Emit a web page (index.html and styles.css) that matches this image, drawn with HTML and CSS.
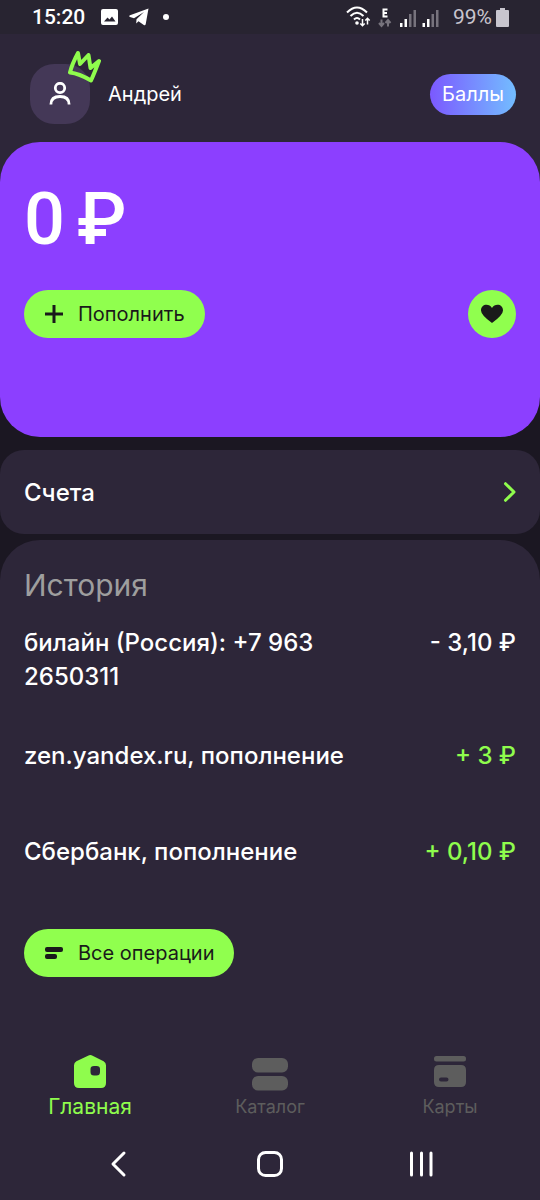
FILE: index.html
```html
<!DOCTYPE html>
<html lang="ru">
<head>
<meta charset="utf-8">
<meta name="viewport" content="width=device-width, initial-scale=1">
<title>Кошелёк</title>
<link rel="stylesheet" href="styles.css">
</head>
<body>
<div class="status">
  <div class="status-left">
    <span class="clock">15:20</span>
    <svg width="18" height="18" viewBox="0 0 18 18" aria-hidden="true"><path fill="#fff" fill-rule="evenodd" d="M2 1h13q2 0 2 2v12q0 2-2 2H2q-2 0-2-2V3q0-2 2-2zm1 12.500h11.500l-3.500-5-2.500 3-2-2z"/></svg>
    <svg width="20" height="18" viewBox="0 0 20 18" aria-hidden="true"><path fill="#fff" d="M19.500.5 1 7.300q-1.700.8 0 1.600l4 1.300L15 4 7.500 11.300l-.3 4.200 2.300-2.200 5.300 3.800q1.400.7 1.900-.9z"/></svg>
    <span class="dot"></span>
  </div>
  <div class="status-right">
    <svg width="96" height="22" viewBox="0 0 96 22" aria-hidden="true">
      <g fill="none" stroke="#fff" stroke-width="2"><path d="M2 6.500q10-10 20 0M5.500 10q6.500-6.500 13 0M9 13.500q3-3 6 0"/></g>
      <circle cx="12" cy="17" r="1.800" fill="#fff"/>
      <path fill="none" stroke="#fff" stroke-width="1.500" d="M17.500 13v6.500m-2.200-2 2.200 2.200 2.200-2.200M22.500 18.500V12.500m-2.200 2 2.200-2.200 2.200 2.200"/>
      <path fill="none" stroke="#fff" stroke-width="2" d="M42.500 3.500H38.500v7h4M38.500 7h3.500"/>
      <path fill="none" stroke="#77737d" stroke-width="2" d="M36.500 13.500v6.500m-2.500-3 2.500 3 2.500-3M43 20.500v-6.500m-2.500 3 2.500-3 2.500 3"/>
      <g fill="#fff"><rect x="55" y="17" width="2.500" height="4"/><rect x="59.500" y="13" width="2.500" height="8"/><rect x="77.500" y="17" width="2.500" height="4"/><rect x="82" y="13" width="2.500" height="8"/></g>
      <g fill="#77737d"><rect x="64" y="8" width="2.500" height="13"/><rect x="68.500" y="4" width="2.500" height="17"/><rect x="86.500" y="8" width="2.500" height="13"/><rect x="91" y="4" width="2.500" height="17"/></g>
    </svg>
    <span class="percent">99%</span>
    <svg width="13" height="19" viewBox="0 0 13 19" aria-hidden="true"><path fill="#c8c5ce" d="M4 0h5v2h3q1 0 1 1v15q0 1-1 1H1q-1 0-1-1V3q0-1 1-1h3z"/></svg>
  </div>
</div>

<header class="header">
  <button class="profile">
    <span class="avatar">
      <svg width="24" height="24" viewBox="0 0 24 24" fill="none" stroke="#fff" stroke-width="2.800" aria-hidden="true"><circle cx="12" cy="6" r="4.700"/><path d="M2.900 22.500q0-8 9.100-8t9.100 8"/></svg>
      <svg class="crown" width="34" height="34" viewBox="0 0 34 34" fill="none" stroke="#8ffc4d" stroke-width="4" stroke-linecap="round" stroke-linejoin="round" aria-hidden="true"><path d="M11 3Q5 14 3 22.500q9 1 21 8Q27 24 32 11l-8.500 7L21.500 5 13 14z"/></svg>
    </span>
    <span>Андрей</span>
  </button>
  <button class="points">Баллы</button>
</header>

<main>
  <div class="balance-wrap">
    <section class="balance">
      <div class="amount"><span>0</span> <span>₽</span></div>
      <div class="actions">
        <button class="pill"><svg width="20" height="20" viewBox="0 0 20 20" aria-hidden="true"><path stroke="#1a1a1a" stroke-width="3" d="M1 10h18M10 1v18"/></svg>Пополнить</button>
        <button class="favorite" aria-label="Избранное"><svg width="22" height="20" viewBox="0 0 22 20" aria-hidden="true"><path fill="#1a1a1a" d="M11 19Q0 11 0 6.500C0 0 8-1 11 4c3-5 11-4 11 2.500Q22 11 11 19z"/></svg></button>
      </div>
    </section>
  </div>

  <button class="accounts"><span>Счета</span><svg width="13" height="20" viewBox="0 0 13 20" aria-hidden="true"><path fill="none" stroke="#8ffc4d" stroke-width="3" stroke-linecap="round" stroke-linejoin="round" d="M2.500 1.700 11 10l-8.500 8.300"/></svg></button>

  <section class="history">
    <h2>История</h2>
    <ul>
      <li><span class="payee">билайн (Россия): +7 963 2650311</span><span>- 3,10 ₽</span></li>
      <li><span class="payee">zen.yandex.ru, пополнение</span><span class="income">+ 3 ₽</span></li>
      <li><span class="payee">Сбербанк, пополнение</span><span class="income">+ 0,10 ₽</span></li>
    </ul>
    <button class="pill"><svg width="20" height="20" viewBox="0 0 20 20" fill="#1a1a1a" aria-hidden="true"><rect x="1" y="4" width="18" height="5" rx="2"/><rect x="1" y="11" width="12" height="5" rx="2"/></svg>Все операции</button>
  </section>
</main>

<nav class="tabs">
  <a class="tab active" href="#"><svg width="36" height="36" viewBox="0 0 36 36" aria-hidden="true"><path fill="#8ffc4d" fill-rule="evenodd" d="M16 2.700q2.300-1.200 4.600 0l11 5.600q2.400 1.300 2.400 4V30q0 5-5 5H7q-5 0-5-5V12.300q0-2.700 2.400-4zM22 13q-3.500 0-3.500 3v3q0 3.500 3.500 3.500h2.500q3.500 0 3.500-3.500v-3q0-3-3.500-3z"/></svg>Главная</a>
  <a class="tab" href="#"><svg width="36" height="36" viewBox="0 0 36 36" fill="#5d5d5d" aria-hidden="true"><rect y="3" width="36" height="14.500" rx="6"/><rect y="21" width="36" height="14.500" rx="6"/></svg>Каталог</a>
  <a class="tab" href="#"><svg width="36" height="36" viewBox="0 0 36 36" fill="#5d5d5d" aria-hidden="true"><rect x="2" y="1" width="32" height="5.500" rx="2.500"/><path fill-rule="evenodd" d="M7 10h22q5 0 5 5v12q0 5-5 5H7q-5 0-5-5V15q0-5 5-5zm2 12.500q-2 0-2 2t2 2h5.500q2 0 2-2t-2-2z"/></svg>Карты</a>
</nav>

<footer class="system">
  <button aria-label="Назад"><svg width="28" height="28" viewBox="0 0 28 28" aria-hidden="true"><path d="m19 3-11 11 11 11"/></svg></button>
  <button aria-label="Домой"><svg width="28" height="28" viewBox="0 0 28 28" aria-hidden="true"><rect x="2.500" y="2.500" width="23" height="23" rx="7"/></svg></button>
  <button aria-label="Недавние"><svg width="28" height="28" viewBox="0 0 28 28" aria-hidden="true"><path d="M4.500 3v22M14.500 3v22M24 3v22"/></svg></button>
</footer>
</body>
</html>
```
FILE: styles.css
```css
* { box-sizing: border-box; }
body {
  margin: 0;
  min-height: 100vh;
  display: flex;
  flex-direction: column;
  background: #2d2639;
  color: #fff;
  font-family: Inter, sans-serif;
}
button {
  border: 0;
  padding: 0;
  background: none;
  color: inherit;
  font: inherit;
  cursor: pointer;
}
svg { display: block; flex: none; }

.status {
  display: flex;
  justify-content: space-between;
  align-items: center;
  height: 34px;
  padding: 0 31px 0 32px;
  background: #282431;
  font: 500 21px/34px Roboto, sans-serif;
}
.status-left { display: flex; align-items: center; gap: 10px; }
.status-left .clock { margin-right: 6px; }
.status-right { display: flex; align-items: center; gap: 4px; }
.percent { margin-left: 8px; color: #c8c5ce; font-weight: 400; }
.dot { width: 6px; height: 6px; margin-left: 4px; border-radius: 50%; background: #fff; }

.header {
  display: flex;
  justify-content: space-between;
  align-items: center;
  padding: 30px 24px 18px 30px;
}
.profile { display: flex; align-items: center; gap: 18px; font-size: 20px; }
.avatar {
  position: relative;
  display: grid;
  place-items: center;
  width: 60px;
  height: 60px;
  border-radius: 24px;
  background: #443857;
}
.crown { position: absolute; top: -14px; right: -11px; }
.points {
  height: 41px;
  padding: 0 12px;
  border-radius: 21px;
  background: linear-gradient(90deg, #7b59ff, #73bdff);
  font-size: 20px;
}

main { background: #1b1722; }
.balance-wrap { background: linear-gradient(#2d2639 50%, #1b1722 50%); }
.balance {
  padding: 36px 24px 99px;
  border-radius: 40px;
  background: #8c3fff;
}
.amount { display: flex; gap: 12px; font: 500 72px/84px Roboto, sans-serif; }
.actions { display: flex; justify-content: space-between; margin-top: 28px; }
.pill {
  display: flex;
  align-items: center;
  gap: 14px;
  height: 48px;
  padding: 0 20px;
  border-radius: 24px;
  background: #90ff4e;
  color: #1a1a1a;
  font-size: 20px;
}
.favorite {
  display: grid;
  place-items: center;
  width: 48px;
  height: 48px;
  border-radius: 50%;
  background: #90ff4e;
}
.accounts {
  display: flex;
  justify-content: space-between;
  align-items: center;
  width: 100%;
  height: 84px;
  margin: 13px 0 6px;
  padding: 0 24px;
  border-radius: 24px;
  background: #2d2639;
  font-size: 24px;
  font-weight: 500;
}
.history {
  padding: 28px 24px 60px;
  border-radius: 40px 40px 0 0;
  background: #2d2639;
}
.history h2 { margin: 0 0 24px; color: #9e9e9e; font-size: 30px; font-weight: 400; line-height: 34px; }
.history ul {
  display: grid;
  gap: 45px;
  margin: 0 0 43px;
  padding: 0;
  list-style: none;
  font-size: 24px;
  font-weight: 500;
  line-height: 34px;
}
.history li { display: flex; justify-content: space-between; gap: 24px; min-height: 51px; white-space: nowrap; }
.history .payee { max-width: 340px; white-space: normal; }
.history ul .income { color: #8ffc4d; }

.tabs { display: grid; grid-template-columns: repeat(3, 1fr); margin-top: auto; }
.tab {
  display: flex;
  flex-direction: column;
  align-items: center;
  gap: 4px;
  padding-top: 2px;
  color: #5d5d5d;
  font-size: 18px;
  line-height: 24px;
  text-decoration: none;
}
.tab.active { gap: 6px; padding-top: 0; color: #8ffc4d; font-size: 21px; }
.system { display: grid; grid-template-columns: repeat(3, 1fr); padding: 31px 44px 22px; }
.system button { display: grid; place-items: center; }
.system svg { fill: none; stroke: #fff; stroke-width: 3; stroke-linecap: round; stroke-linejoin: round; }
```
